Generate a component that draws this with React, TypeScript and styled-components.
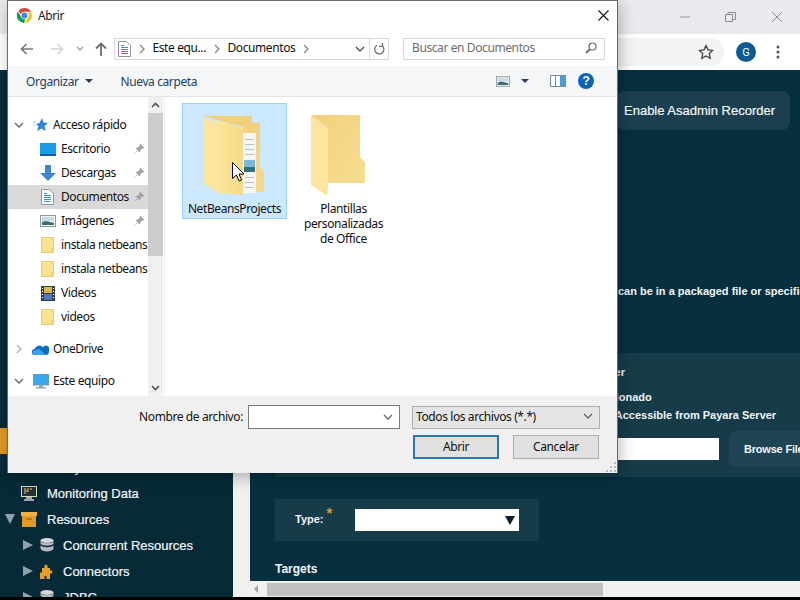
import styled, { createGlobalStyle } from "styled-components"

const GlobalStyle = createGlobalStyle`
    html, body {
        margin: 0;
        padding: 0;
        width: 800px;
        height: 600px;
        overflow: hidden;
        background: #000;
    }
    * { box-sizing: border-box; }
`

const Page = styled.div`
    position: relative;
    width: 800px;
    height: 600px;
    display: flex;
    flex-direction: column;
    overflow: hidden;
    font-family: "Liberation Sans", Arial, sans-serif;
    padding-bottom: 3px;
    background: #000;
`

/* browser behind the dialog */
const TitleStrip = styled.div`
    height: 34px;
    background: #e8eaed;
    display: flex;
    justify-content: flex-end;
    align-items: center;
`
const WinButton = styled.div`
    width: 46px;
    height: 28px;
    display: flex;
    align-items: center;
    justify-content: center;
`
const BrowserBar = styled.div`
    height: 36px;
    background: #fff;
    display: flex;
    align-items: center;
    justify-content: flex-end;
`
const Omnibox = styled.div`
    width: 340px;
    height: 28px;
    margin-right: 12px;
    padding-right: 10px;
    border-radius: 0 14px 14px 0;
    background: #f1f3f4;
    display: flex;
    align-items: center;
    justify-content: flex-end;
`
const Avatar = styled.div`
    width: 20px;
    height: 20px;
    border-radius: 50%;
    background: #0b5a94;
    color: #fff;
    font: 11px Roboto, sans-serif;
    display: flex;
    align-items: center;
    justify-content: center;
`
const Kebab = styled.div`
    width: 44px;
    display: flex;
    justify-content: center;
`
const Workspace = styled.div`
    flex: 1;
    min-height: 0;
    display: flex;
`
const Sidebar = styled.div`
    width: 233px;
    background: #062a38;
    padding-top: 358px;
    overflow: hidden;
`
const SideRow = styled.div<{ $level: number; $active?: boolean }>`
    height: 26px;
    display: flex;
    align-items: center;
    padding-left: ${p => (p.$level ? 23 : 5)}px;
    color: #f2f6f7;
    font-size: 13px;
    -webkit-text-stroke: 0.2px #f2f6f7;
    white-space: nowrap;
    background: ${p => (p.$active ? "#e19a26" : "transparent")};
`
const SideArrow = styled.span<{ $down?: boolean; $hidden?: boolean }>`
    width: 0;
    height: 0;
    flex: none;
    visibility: ${p => (p.$hidden ? "hidden" : "visible")};
    ${p => p.$down
        ? "border-left: 5px solid transparent; border-right: 5px solid transparent; border-top: 10px solid #8fa3ab; margin-right: 6px;"
        : "border-top: 5px solid transparent; border-bottom: 5px solid transparent; border-left: 10px solid #8fa3ab; margin-right: 6px;"}
`
const SideIcon = styled.span<{ $level: number }>`
    width: 16px;
    height: 20px;
    margin-right: ${p => (p.$level ? 8 : 10)}px;
    flex: none;
    display: flex;
    align-items: center;
    justify-content: center;
`
const Gutter = styled.div`
    width: 17px;
    background: #f0f0f0;
`
const RightColumn = styled.div`
    flex: 1;
    min-width: 0;
    display: flex;
    flex-direction: column;
`
const MainArea = styled.div`
    flex: 1;
    min-height: 0;
    overflow: hidden;
    background: #06303f;
    color: #f2f6f7;
    padding: 21px 0 0 25px;
`
const HeaderRow = styled.div`
    display: flex;
    justify-content: flex-end;
    padding-right: 10px;
`
const RecorderButton = styled.div`
    width: 173px;
    height: 39px;
    border-radius: 8px;
    background: #1b3f4e;
    font-size: 13px;
    -webkit-text-stroke: 0.2px #f2f6f7;
    line-height: 39px;
    padding-left: 7px;
    white-space: nowrap;
`
const Intro = styled.div`
    margin-top: 154px;
    padding-left: 19px;
    height: 14px;
    font-size: 11px;
    line-height: 14px;
    font-weight: bold;
    white-space: nowrap;
`
const UploadPanel = styled.div`
    margin-top: 55px;
    width: 560px;
    height: 124px;
    background: #163c4a;
    font-size: 11px;
    font-weight: bold;
    white-space: nowrap;
    padding-top: 12px;
`
const PanelLine = styled.div<{ $top: number; $left: number }>`
    margin-top: ${p => p.$top}px;
    padding-left: ${p => p.$left}px;
    height: 14px;
    line-height: 14px;
`
const UploadRow = styled.div`
    margin-top: 9px;
    display: flex;
    align-items: center;
    justify-content: flex-end;
`
const PathInput = styled.div`
    width: 300px;
    height: 22px;
    background: #fff;
`
const BrowseButton = styled.div`
    margin-left: 10px;
    width: 106px;
    height: 36px;
    border-radius: 8px 0 0 8px;
    background: #1f4555;
    line-height: 36px;
    padding-left: 15px;
    letter-spacing: -0.2px;
    overflow: hidden;
`
const TypePanel = styled.div`
    margin-top: 22px;
    width: 264px;
    height: 42px;
    background: #163c4a;
    display: flex;
    align-items: center;
    padding-left: 20px;
`
const TypeLabel = styled.div`
    width: 60px;
    padding-bottom: 2px;
    font-size: 11px;
    font-weight: bold;
    white-space: nowrap;
`
const Required = styled.sup`
    color: #e19a26;
    font-size: 15px;
    line-height: 0;
    margin-left: 3px;
`
const TypeSelect = styled.div`
    width: 164px;
    height: 22px;
    background: #fff;
    display: flex;
    align-items: center;
    justify-content: flex-end;
    padding-right: 4px;
`
const TargetsTitle = styled.div`
    margin-top: 21px;
    font-size: 12px;
    font-weight: bold;
`
const HScroll = styled.div`
    height: 16px;
    background: #f1f1f1;
    display: flex;
    align-items: center;
    padding-left: 4px;
`
const HThumb = styled.div`
    margin-left: 9px;
    width: 336px;
    height: 13px;
    background: #c1c1c1;
`

/* file dialog */
const Dialog = styled.div`
    position: absolute;
    left: 7px;
    top: 0;
    width: 611px;
    height: 473px;
    border: 1px solid #6a6a6a;
    border-bottom: none;
    background: #fff;
    box-shadow: 2px 4px 14px rgba(0, 0, 0, 0.28);
    display: flex;
    flex-direction: column;
    color: #000;
    font: 12px "Noto Sans", sans-serif;
    letter-spacing: -0.4px;
`
const DialogTitle = styled.div`
    height: 30px;
    display: flex;
    align-items: center;
    padding: 0 8px 2px 9px;
`
const TitleText = styled.span`
    margin-left: 6px;
    flex: 1;
    color: #222;
`
const AddressRow = styled.div`
    height: 35px;
    display: flex;
    align-items: center;
    padding-left: 4px;
`
const NavButton = styled.div<{ $w: number }>`
    width: ${p => p.$w}px;
    display: flex;
    justify-content: center;
`
const AddressBox = styled.div`
    width: 275px;
    height: 22px;
    border: 1px solid #d9d9d9;
    display: flex;
    align-items: center;
    padding-left: 3px;
`
const Crumb = styled.span`
    color: #111;
    white-space: nowrap;
    padding-bottom: 2px;
`
const CrumbSep = styled.span`
    width: 21.5px;
    flex: none;
    display: flex;
    justify-content: center;
`
const AddressEnd = styled.div`
    margin-left: auto;
    height: 100%;
    display: flex;
    align-items: center;
`
const RefreshCell = styled.div`
    width: 19px;
    height: 100%;
    margin-left: 4px;
    border-left: 1px solid #d9d9d9;
    display: flex;
    align-items: center;
    justify-content: center;
`
const SearchBox = styled.div`
    margin-left: 14px;
    width: 202px;
    height: 22px;
    border: 1px solid #d9d9d9;
    display: flex;
    align-items: center;
    justify-content: space-between;
    padding: 0 7px 2px 8px;
    color: #6d6d6d;
`
const Toolbar = styled.div`
    height: 31px;
    background: #f5f6f7;
    border-bottom: 1px solid #e5e5e5;
    display: flex;
    align-items: center;
    padding: 0 23px 0 18px;
    color: #263e58;
`
const ToolLabel = styled.span<{ $gap: number }>`
    margin-right: ${p => p.$gap}px;
    display: flex;
    align-items: center;
`
const Caret = styled.span<{ $before?: number; $after?: number }>`
    width: 0;
    height: 0;
    margin-left: ${p => p.$before ?? 6}px;
    margin-right: ${p => p.$after ?? 0}px;
    border-left: 4px solid transparent;
    border-right: 4px solid transparent;
    border-top: 4px solid #263e58;
`
const ToolEnd = styled.div`
    margin-left: auto;
    display: flex;
    align-items: center;
`
const HelpBadge = styled.div`
    width: 16px;
    height: 16px;
    margin-left: 12px;
    border-radius: 50%;
    background: #0b64b5;
    color: #fff;
    font: bold 12px/16px "Liberation Sans", sans-serif;
    text-align: center;
`
const DialogBody = styled.div`
    flex: 1;
    min-height: 0;
    display: flex;
`
const NavPane = styled.div`
    width: 140px;
    padding-top: 16px;
    overflow: hidden;
`
const NavRow = styled.div<{ $selected?: boolean; $gapTop?: number }>`
    height: 24px;
    margin-top: ${p => p.$gapTop ?? 0}px;
    display: flex;
    align-items: center;
    white-space: nowrap;
    overflow: hidden;
    background: ${p => (p.$selected ? "#d9d9d9" : "transparent")};
    color: #111;
`
const NavChevron = styled.span`
    width: 24px;
    flex: none;
    display: flex;
    justify-content: center;
    padding-right: 2px;
`
const NavIcon = styled.span<{ $child?: boolean }>`
    width: 17px;
    flex: none;
    margin-left: ${p => (p.$child ? 7 : 0)}px;
    margin-right: ${p => (p.$child ? 5 : 4)}px;
    display: flex;
    justify-content: center;
`
const NavLabel = styled.span`
    flex: 1;
    min-width: 0;
    overflow: hidden;
    padding-bottom: 1px;
`
const NavPin = styled.span`
    width: 15px;
    flex: none;
    display: flex;
`
const VScroll = styled.div`
    width: 15px;
    background: #f0f0f0;
    display: flex;
    flex-direction: column;
`
const VArrow = styled.div`
    height: 16px;
    flex: none;
    display: flex;
    align-items: center;
    justify-content: center;
`
const VThumb = styled.div`
    height: 143px;
    background: #cdcdcd;
`
const VFill = styled.div`
    flex: 1;
`
const FilePane = styled.div`
    flex: 1;
    margin-left: 1px;
    border-left: 1px solid #f0f0f0;
    padding: 6px 0 0 17px;
    display: flex;
    gap: 4px;
    align-items: flex-start;
    background: #fff;
`
const FileTile = styled.div<{ $selected?: boolean }>`
    position: relative;
    width: 105px;
    padding: 11px 2px 2px;
    border: 1px solid ${p => (p.$selected ? "#99d1ff" : "transparent")};
    background: ${p => (p.$selected ? "#cce8ff" : "transparent")};
    display: flex;
    flex-direction: column;
    align-items: center;
    text-align: center;
    line-height: 15px;
    color: #111;
`
const FileName = styled.div<{ $max: number }>`
    max-width: ${p => p.$max}px;
`
const FolderArt = styled.svg<{ $shift: number }>`
    display: block;
    margin-bottom: 6px;
    margin-right: ${p => p.$shift}px;
`
const Pointer = styled.svg`
    position: absolute;
    left: 49px;
    top: 58px;
`
const Footer = styled.div`
    height: 77px;
    background: #f0f0f0;
    padding: 9px 17px 0 0;
    position: relative;
`
const FooterRow = styled.div`
    display: flex;
    align-items: center;
    justify-content: flex-end;
`
const FileLabel = styled.span`
    margin-right: 5px;
    color: #111;
    padding-bottom: 2px;
`
const NameInput = styled.div`
    width: 152px;
    height: 24px;
    background: #fff;
    border: 1px solid #7a7a7a;
    display: flex;
    align-items: center;
    justify-content: flex-end;
    padding-right: 6px;
`
const TypeCombo = styled.div`
    margin-left: 12px;
    width: 188px;
    height: 23px;
    background: #e5e5e5;
    border: 1px solid #adadad;
    display: flex;
    align-items: center;
    justify-content: space-between;
    padding: 0 6px 2px 3px;
    color: #111;
`
const ButtonRow = styled(FooterRow)`
    margin-top: 6px;
    padding-right: 1px;
    gap: 14px;
`
const DialogButton = styled.div<{ $primary?: boolean }>`
    width: 86px;
    height: 24px;
    background: #e1e1e1;
    border: ${p => (p.$primary ? "2px solid #2a76b0" : "1px solid #adadad")};
    display: flex;
    align-items: center;
    justify-content: center;
    padding-bottom: 2px;
    color: #111;
`
const Grip = styled.svg`
    position: absolute;
    right: 1px;
    bottom: 1px;
`

const Chevron = ({ dir = "down", color = "#555" }: { dir?: string; color?: string }) => {
    const d = dir === "down" ? "M1 3 5 7 9 3" : dir === "right" ? "M3 1 7 5 3 9" : "M1 7 5 3 9 7"
    return (
        <svg width="10" height="10" viewBox="0 0 10 10" fill="none">
            <path d={d} stroke={color} strokeWidth="1.4" />
        </svg>
    )
}

const ChromeLogo = () => (
    <svg width="15" height="15" viewBox="0 0 16 16">
        <path d="M8 0a8 8 0 0 1 7 4H8a4 4 0 0 0-3.8 2.6L1.5 3.1A8 8 0 0 1 8 0z" fill="#db4437" />
        <path d="M15.3 4.8A8 8 0 0 1 8 16l3.5-5.6A4 4 0 0 0 11.2 5z" fill="#f4c20d" />
        <path d="M7.4 16A8 8 0 0 1 1 3.8l3.4 5.9A4 4 0 0 0 9 11.8z" fill="#0f9d58" />
        <circle cx="8" cy="8" r="3.1" fill="#4285f4" />
    </svg>
)

const DocIcon = () => (
    <svg width="13" height="16" viewBox="0 0 13 16">
        <path d="M.5.5h8l4 4v11H.5z" fill="#fff" stroke="#8a97a6" />
        <path d="M3 4.5h3M3 6.5h7M3 8.5h7M3 10.5h7M3 12.5h7" stroke="#3f8fc4" />
    </svg>
)

const SmallFolder = () => (
    <svg width="13" height="16" viewBox="0 0 13 16">
        <path d="M.5.5h12v15H.5z" fill="#fbe38e" stroke="#e7c96c" />
        <path d="M10 11h2.5v4.5H10z" fill="#f2d272" />
    </svg>
)

const Pin = () => (
    <svg width="12" height="12" viewBox="0 0 11 11">
        <path d="M6.5.5 10.5 4.5 9.5 5 8 5 6.5 7.5 6.5 9 2 4.5 3.5 4.5 6 3 6 1.5zM3.5 7 .5 10.5 4 7.5z" fill="#a3a3a3" />
    </svg>
)

const DesktopIcon = () => (
    <svg width="16" height="13" viewBox="0 0 16 13">
        <rect width="16" height="13" fill="#1e9be8" />
        <path d="M0 11h16v2H0z" fill="#0c5fa8" />
    </svg>
)

const DownloadIcon = () => (
    <svg width="16" height="16" viewBox="0 0 16 16">
        <path d="M5 0h6v8h5l-8 8-8-8h5z" fill="#3b85d1" />
    </svg>
)

const PictureIcon = ({ w = 16, h = 12 }: { w?: number; h?: number }) => (
    <svg width={w} height={h} viewBox="0 0 16 12">
        <rect x=".5" y=".5" width="15" height="11" fill="#eef3f6" stroke="#8d99a3" />
        <path d="M2 2h12v4H2z" fill="#c9dbe6" />
        <path d="M2 10V7l4-1 8 2v2z" fill="#3f6d72" />
    </svg>
)

const FilmIcon = () => (
    <svg width="14" height="15" viewBox="0 0 14 15">
        <rect width="14" height="15" fill="#3a3f4a" />
        <path d="M3 1h8v6H3z" fill="#d8b94a" />
        <path d="M3 8h8v6H3z" fill="#4a78c9" />
        <path d="M1 2h1v1H1zM1 5h1v1H1zM1 8h1v1H1zM1 11h1v1H1zM12 2h1v1h-1zM12 5h1v1h-1zM12 8h1v1h-1zM12 11h1v1h-1z" fill="#fff" />
    </svg>
)

const StarArrow = () => (
    <svg width="15" height="14" viewBox="0 0 15 14">
        <path d="M9 0l1.6 4.4L15 5l-3.4 3 1 5-4.1-2.6L4 13l1.5-5L3 6l3.5-1z" fill="#2b86d8" />
        <path d="M0 4h3M0 7h2" stroke="#8cc2ee" />
    </svg>
)

const CloudIcon = () => (
    <svg width="17" height="11" viewBox="0 0 17 11">
        <path d="M3 11a3 3 0 0 1-.5-6A5 5 0 0 1 11 3.2 3.8 3.8 0 0 1 16.9 8 3 3 0 0 1 14 11z" fill="#0f6cbd" />
        <path d="M3 11a2.6 2.6 0 0 1-2-4.3L7 5l7 6z" fill="#2fa8e8" />
    </svg>
)

const MonitorIcon = () => (
    <svg width="16" height="15" viewBox="0 0 16 15">
        <rect width="16" height="11" fill="#36a9ec" stroke="#7b98ac" />
        <path d="M6 11h4v2H6zM3 13h10v1.5H3z" fill="#9aa9b4" />
    </svg>
)

const DataIcon = () => (
    <svg width="16" height="15" viewBox="0 0 16 15">
        <rect x=".5" y=".5" width="15" height="10" fill="#26303a" stroke="#d8e0b0" />
        <path d="M3 3h2M6 3h2M9 3h2M3 5h5M3 7h2" stroke="#f1d55a" />
        <path d="M5 11h6v2H5zM3 13h10v2H3z" fill="#9aa5ab" />
    </svg>
)

const BoxIcon = () => (
    <svg width="16" height="15" viewBox="0 0 16 15">
        <rect width="16" height="4" fill="#f3b23e" />
        <rect x="1" y="4" width="14" height="11" fill="#e19a26" />
        <path d="M5 7h6" stroke="#8c5a10" />
    </svg>
)

const DbIcon = () => (
    <svg width="14" height="14" viewBox="0 0 14 14">
        <ellipse cx="7" cy="2.5" rx="6.5" ry="2.5" fill="#d4d8da" />
        <path d="M.5 3c1 3 12 3 13 0v2.5c-1 3-12 3-13 0zM.5 7c1 3 12 3 13 0v3.5c-1 4-12 4-13 0z" fill="#b5bbbe" />
    </svg>
)

const PuzzleIcon = () => (
    <svg width="16" height="16" viewBox="0 0 16 16">
        <path d="M3 5h2.5V3a1.5 1.5 0 0 1 3 0v2H11v2.5h1a1.5 1.5 0 0 1 0 3h-1V16H7.500v-3h-2v3H1V9.500h2z" fill="#e9a02b" />
    </svg>
)

const LifecycleIcon = () => (
    <svg width="14" height="14" viewBox="0 0 14 14">
        <circle cx="7" cy="7" r="6" fill="#5aa6b4" />
    </svg>
)

const nav = [
    { label: "Escritorio", icon: <DesktopIcon />, pin: true },
    { label: "Descargas", icon: <DownloadIcon />, pin: true },
    { label: "Documentos", icon: <DocIcon />, pin: true, selected: true },
    { label: "Imágenes", icon: <PictureIcon />, pin: true },
    { label: "instala netbeans", icon: <SmallFolder /> },
    { label: "instala netbeans", icon: <SmallFolder /> },
    { label: "Videos", icon: <FilmIcon /> },
    { label: "videos", icon: <SmallFolder /> },
]

const side = [
    { label: "Applications", level: 0, active: true },
    { label: "Lifecycle Modules", level: 0, icon: <LifecycleIcon /> },
    { label: "Monitoring Data", level: 0, icon: <DataIcon /> },
    { label: "Resources", level: 0, icon: <BoxIcon />, down: true, arrow: true },
    { label: "Concurrent Resources", level: 1, icon: <DbIcon />, arrow: true },
    { label: "Connectors", level: 1, icon: <PuzzleIcon />, arrow: true },
    { label: "JDBC", level: 1, icon: <DbIcon />, arrow: true },
]

export default function App() {
    return (
        <Page>
            <GlobalStyle />
            <TitleStrip>
                <WinButton>
                    <svg width="12" height="12" viewBox="0 0 12 12"><path d="M1 6h10" stroke="#9a9ca0" /></svg>
                </WinButton>
                <WinButton>
                    <svg width="12" height="12" viewBox="0 0 12 12" fill="none"><path d="M.5 3.5h7v7h-7zM3 3.5V1.5h7.5v7H8" stroke="#8a8c90" /></svg>
                </WinButton>
                <WinButton>
                    <svg width="12" height="12" viewBox="0 0 12 12"><path d="M1 1l10 10M11 1 1 11" stroke="#8a8c90" /></svg>
                </WinButton>
            </TitleStrip>
            <BrowserBar>
                <Omnibox>
                    <svg width="16" height="16" viewBox="0 0 16 16" fill="none">
                        <path d="M8 1.5l2 4.3 4.7.6-3.4 3.200.9 4.700L8 12l-4.200 2.300.9-4.700L1.300 6.400 6 5.800z" stroke="#444" strokeWidth="1.3" />
                    </svg>
                </Omnibox>
                <Avatar>G</Avatar>
                <Kebab>
                    <svg width="4" height="14" viewBox="0 0 4 14" fill="#555">
                        <circle cx="2" cy="2" r="1.5" /><circle cx="2" cy="7" r="1.5" /><circle cx="2" cy="12" r="1.5" />
                    </svg>
                </Kebab>
            </BrowserBar>
            <Workspace>
                <Sidebar>
                    {side.map(s => (
                        <SideRow key={s.label} $level={s.level} $active={s.active}>
                            <SideArrow $down={s.down} $hidden={!s.arrow} />
                            <SideIcon $level={s.level}>{s.icon}</SideIcon>
                            {s.label}
                        </SideRow>
                    ))}
                </Sidebar>
                <Gutter />
                <RightColumn>
                    <MainArea>
                        <HeaderRow>
                            <RecorderButton>Enable Asadmin Recorder</RecorderButton>
                        </HeaderRow>
                        <Intro>Specify the location of the application to deploy. Applications can be in a packaged file or specified as a directory.</Intro>
                        <UploadPanel>
                            <PanelLine $top={0} $left={70}>Location: Packaged File to Be Uploaded to the Server</PanelLine>
                            <PanelLine $top={11} $left={224}>Ningún archivo seleccionado</PanelLine>
                            <PanelLine $top={4} $left={128}>Local Packaged File or Directory That Is Accessible from Payara Server</PanelLine>
                            <UploadRow>
                                <PathInput />
                                <BrowseButton>Browse Files</BrowseButton>
                            </UploadRow>
                        </UploadPanel>
                        <TypePanel>
                            <TypeLabel>Type:<Required>*</Required></TypeLabel>
                            <TypeSelect>
                                <svg width="10" height="9" viewBox="0 0 10 9"><path d="M0 0h10L5 9z" fill="#0a1f29" /></svg>
                            </TypeSelect>
                        </TypePanel>
                        <TargetsTitle>Targets</TargetsTitle>
                    </MainArea>
                    <HScroll>
                        <svg width="4" height="8" viewBox="0 0 4 8"><path d="M4 0v8L0 4z" fill="#a3a3a3" /></svg>
                        <HThumb />
                    </HScroll>
                </RightColumn>
            </Workspace>

            <Dialog>
                <DialogTitle>
                    <ChromeLogo />
                    <TitleText>Abrir</TitleText>
                    <svg width="11" height="11" viewBox="0 0 11 11"><path d="M.5.5l10 10M10.5.5l-10 10" stroke="#111" strokeWidth="1.1" /></svg>
                </DialogTitle>
                <AddressRow>
                    <NavButton $w={30}>
                        <svg width="14" height="12" viewBox="0 0 14 12" fill="none"><path d="M13 6H2M6.5 1 1.5 6l5 5" stroke="#7a7a7a" strokeWidth="1.7" /></svg>
                    </NavButton>
                    <NavButton $w={30}>
                        <svg width="14" height="12" viewBox="0 0 14 12" fill="none"><path d="M1 6h11M7.5 1l5 5-5 5" stroke="#d4d4d4" strokeWidth="1.7" /></svg>
                    </NavButton>
                    <NavButton $w={16}>
                        <svg width="8" height="6" viewBox="0 0 8 6" fill="none"><path d="M1 1l3 3 3-3" stroke="#9a9a9a" strokeWidth="1.3" /></svg>
                    </NavButton>
                    <NavButton $w={26}>
                        <svg width="12" height="14" viewBox="0 0 12 14" fill="none"><path d="M6 14V2M1 6.5l5-5 5 5" stroke="#6f6f6f" strokeWidth="1.8" /></svg>
                    </NavButton>
                    <AddressBox>
                        <DocIcon />
                        <CrumbSep><Chevron dir="right" color="#8a8a8a" /></CrumbSep>
                        <Crumb>Este equ...</Crumb>
                        <CrumbSep><Chevron dir="right" color="#8a8a8a" /></CrumbSep>
                        <Crumb>Documentos</Crumb>
                        <CrumbSep><Chevron dir="right" color="#8a8a8a" /></CrumbSep>
                        <AddressEnd>
                            <Chevron color="#555" />
                            <RefreshCell>
                                <svg width="12" height="13" viewBox="0 0 12 13" fill="none">
                                    <path d="M9.5 4A4.6 4.6 0 1 1 4 3.3M9.5 1v3.3H6" stroke="#6f6f6f" strokeWidth="1.3" />
                                </svg>
                            </RefreshCell>
                        </AddressEnd>
                    </AddressBox>
                    <SearchBox>
                        Buscar en Documentos
                        <svg width="12" height="12" viewBox="0 0 12 12" fill="none">
                            <circle cx="7.5" cy="4.5" r="3.5" stroke="#6a6a6a" strokeWidth="1.2" />
                            <path d="M5 7 1 11" stroke="#6a6a6a" strokeWidth="1.8" />
                        </svg>
                    </SearchBox>
                </AddressRow>
                <Toolbar>
                    <ToolLabel $gap={28}>Organizar<Caret /></ToolLabel>
                    <ToolLabel $gap={0}>Nueva carpeta</ToolLabel>
                    <ToolEnd>
                        <PictureIcon w={14} h={11} />
                        <Caret $before={11} $after={21} />
                        <svg width="16" height="12" viewBox="0 0 16 12">
                            <rect x=".5" y=".5" width="15" height="11" fill="#fff" stroke="#7d8b96" />
                            <path d="M10 1h5v10h-5z" fill="#4a9ad4" />
                            <path d="M5.5 1v10" stroke="#7d8b96" />
                        </svg>
                        <HelpBadge>?</HelpBadge>
                    </ToolEnd>
                </Toolbar>
                <DialogBody>
                    <NavPane>
                        <NavRow>
                            <NavChevron><Chevron color="#666" /></NavChevron>
                            <NavIcon><StarArrow /></NavIcon>
                            <NavLabel>Acceso rápido</NavLabel>
                        </NavRow>
                        {nav.map((n, i) => (
                            <NavRow key={i} $selected={n.selected}>
                                <NavChevron />
                                <NavIcon $child>{n.icon}</NavIcon>
                                <NavLabel>{n.label}</NavLabel>
                                {n.pin ? <NavPin><Pin /></NavPin> : null}
                            </NavRow>
                        ))}
                        <NavRow $gapTop={8}>
                            <NavChevron><Chevron dir="right" color="#b0b0b0" /></NavChevron>
                            <NavIcon><CloudIcon /></NavIcon>
                            <NavLabel>OneDrive</NavLabel>
                        </NavRow>
                        <NavRow $gapTop={8}>
                            <NavChevron><Chevron color="#666" /></NavChevron>
                            <NavIcon><MonitorIcon /></NavIcon>
                            <NavLabel>Este equipo</NavLabel>
                        </NavRow>
                    </NavPane>
                    <VScroll>
                        <VArrow><svg width="9" height="6" viewBox="0 0 9 6" fill="none"><path d="M1 5l3.5-3.5L8 5" stroke="#505050" strokeWidth="1.6" /></svg></VArrow>
                        <VThumb />
                        <VFill />
                        <VArrow><svg width="9" height="6" viewBox="0 0 9 6" fill="none"><path d="M1 1l3.5 3.5L8 1" stroke="#505050" strokeWidth="1.6" /></svg></VArrow>
                    </VScroll>
                    <FilePane>
                        <FileTile $selected>
                            <FolderArt $shift={2} width="62" height="80" viewBox="0 0 62 80">
                                <defs>
                                    <linearGradient id="flapA" x1="0" x2="1" y1="0" y2="0">
                                        <stop offset="0" stopColor="#fde99d" /><stop offset="1" stopColor="#f7da85" />
                                    </linearGradient>
                                    <linearGradient id="backA" x1="0" x2="0" y1="0" y2="1">
                                        <stop offset="0" stopColor="#f0d07a" /><stop offset="1" stopColor="#f7d98a" />
                                    </linearGradient>
                                </defs>
                                <path d="M0 1h49v7h8v44l4 6v19H50V30H40V12z" fill="url(#backA)" />
                                <path d="M40 18h13v60H40z" fill="#f6f6f6" />
                                <path d="M42 24.5h9M42 29.5h9M42 34.5h9M42 39.5h9M42 62.5h9M42 67.5h9M42 72.5h9" stroke="#a9c6d6" />
                                <path d="M41 45h11v7H41z" fill="#7ab7da" />
                                <path d="M41 52h11v5H41z" fill="#34707f" />
                                <path d="M9 4 40 13v67l-22-2V15z" fill="url(#flapA)" />
                                <path d="M0 1 18 13v67L0 68z" fill="#fce69f" />
                            </FolderArt>
                            <FileName $max={100}>NetBeansProjects</FileName>
                            <Pointer width="13" height="20" viewBox="0 0 13 20">
                                <path d="M.5.5v16l4-3.5 2.5 6 2.5-1-2.5-6h5z" fill="#fff" stroke="#000" />
                            </Pointer>
                        </FileTile>
                        <FileTile>
                            <FolderArt $shift={10} width="56" height="80" viewBox="0 0 56 80">
                                <defs>
                                    <linearGradient id="backB" x1="0" x2="1" y1="0" y2="1">
                                        <stop offset="0" stopColor="#f0d27c" /><stop offset="1" stopColor="#f8dd90" />
                                    </linearGradient>
                                </defs>
                                <path d="M0 0h49v42l5 5v21H17z" fill="url(#backB)" />
                                <path d="M0 0 17 13v60l-1 8L0 70z" fill="#fce69f" />
                            </FolderArt>
                            <FileName $max={84}>Plantillas personalizadas de Office</FileName>
                        </FileTile>
                    </FilePane>
                </DialogBody>
                <Footer>
                    <FooterRow>
                        <FileLabel>Nombre de archivo:</FileLabel>
                        <NameInput><Chevron color="#666" /></NameInput>
                        <TypeCombo>Todos los archivos (*.*)<Chevron color="#666" /></TypeCombo>
                    </FooterRow>
                    <ButtonRow>
                        <DialogButton $primary>Abrir</DialogButton>
                        <DialogButton>Cancelar</DialogButton>
                    </ButtonRow>
                    <Grip width="10" height="10" viewBox="0 0 10 10" fill="#b8b8b8">
                        <path d="M8 0h2v2H8zM4 4h2v2H4zM8 4h2v2H8zM0 8h2v2H0zM4 8h2v2H4zM8 8h2v2H8z" />
                    </Grip>
                </Footer>
            </Dialog>
        </Page>
    )
}
